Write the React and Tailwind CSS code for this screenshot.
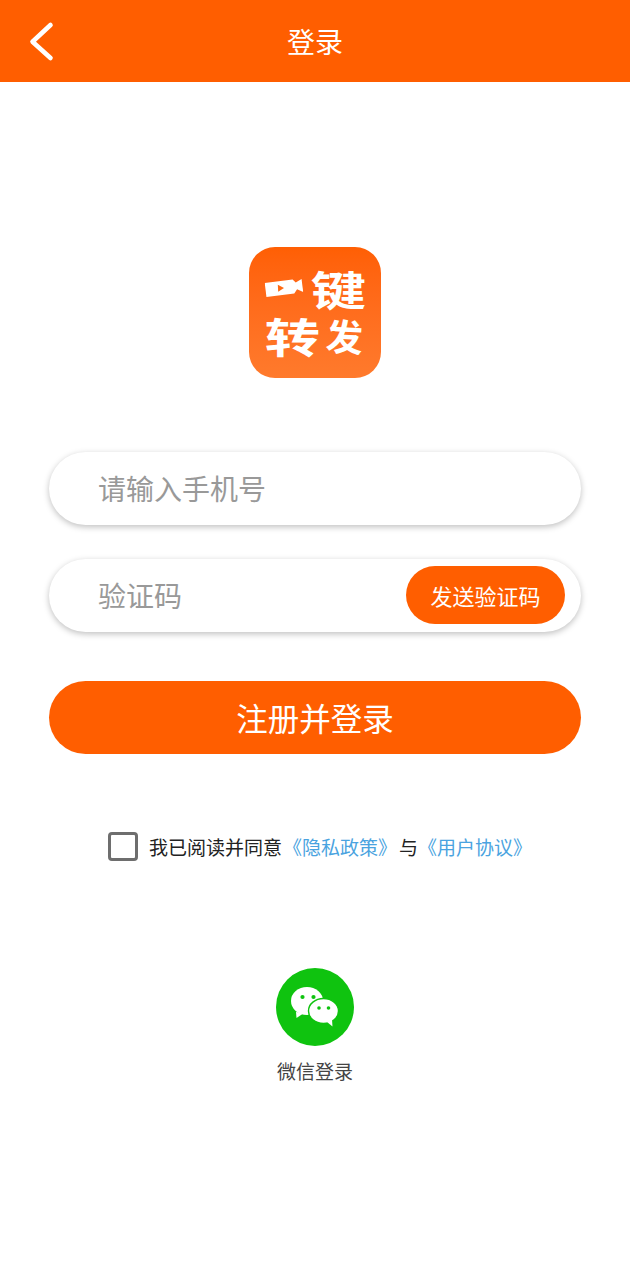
const cjk = { fontFamily: '"Noto Sans CJK SC", "Noto Sans", sans-serif' };

const WeChatIcon = () => (
  <svg viewBox="0 0 78 78" className="w-[78px] h-[78px]">
    <circle cx="39" cy="39" r="39" fill="#0fc30f" />
    <ellipse cx="31" cy="33" rx="16" ry="14" fill="#fff" />
    <path d="M20 44 L20.5 50 L28 45 Z" fill="#fff" />
    <circle cx="26.5" cy="29" r="2.1" fill="#0fc30f" />
    <circle cx="37.5" cy="29" r="2.1" fill="#0fc30f" />
    <ellipse cx="47.5" cy="43" rx="15" ry="12.5" fill="#fff" stroke="#0fc30f" strokeWidth="1.4" />
    <path d="M51 54 L56.5 58.5 L56 51 Z" fill="#fff" />
    <circle cx="43" cy="40" r="1.8" fill="#0fc30f" />
    <circle cx="52.5" cy="40" r="1.8" fill="#0fc30f" />
  </svg>
);

const Logo = () => (
  <div
    className="w-[132px] h-[131px] rounded-[26px] bg-gradient-to-b from-[#ff5f04] to-[#ff7a2c] flex flex-col items-center pt-[20px] text-white font-bold select-none"
    style={cjk}
  >
    <div className="h-[42px] w-[104px] flex items-center justify-between leading-none">
      <svg viewBox="0 0 38 18" className="w-[38px] h-[18px] ml-[2px] -rotate-3 shrink-0">
        <path d="M0 3 L28 1 L31 4 L37 1 L38 14 L32 11 L29 15 L1 17 Z" fill="#fff" />
        <path d="M13 5.5 L19 9 L13 12.5 Z" fill="#ff6a12" />
      </svg>
      <span className="text-[41px] w-[41px] mr-[8px] scale-x-[1.35] text-center">键</span>
    </div>
    <div className="h-[46px] mt-[3px] w-[98px] flex items-center justify-between leading-none">
      <span className="text-[41px] w-[41px] ml-[6px] scale-x-[1.35] text-center">转</span>
      <span className="text-[37px] w-[37px] mr-[1px] rotate-3 text-center">发</span>
    </div>
  </div>
);

export default function App() {
  return (
    <div className="w-[630px] min-h-[1280px] bg-white flex flex-col items-center" style={cjk}>
      <header className="w-full h-[82px] bg-[#ff5e00] flex items-center justify-center relative">
        <button className="absolute left-0 top-0 h-full w-[82px]">
          <svg viewBox="0 0 82 82" className="w-[82px] h-[82px]" fill="none">
            <path d="M50.5 25 L32.5 41.7 L50.5 58" stroke="#fff" strokeWidth="4.6" strokeLinecap="round" strokeLinejoin="round" />
          </svg>
        </button>
        <h1 className="text-[28px] leading-none text-white font-normal">登录</h1>
      </header>

      <div className="mt-[165px]">
        <Logo />
      </div>

      <div className="w-[532px] mt-[74px] flex flex-col">
        <div className="h-[73px] rounded-full bg-white shadow-[0_2px_6px_rgba(0,0,0,0.25)] flex items-center pl-[49px] pr-4">
          <input
            placeholder="请输入手机号"
            className="w-full -mt-[2px] text-[28px] outline-none placeholder:text-[#999999]"
          />
        </div>
        <div className="h-[73px] mt-[34px] rounded-full bg-white shadow-[0_2px_6px_rgba(0,0,0,0.25)] flex items-center pl-[49px] pr-[16px]">
          <input
            placeholder="验证码"
            className="flex-1 min-w-0 -mt-[2px] text-[28px] outline-none placeholder:text-[#999999]"
          />
          <button className="w-[159px] h-[58px] rounded-[29px] bg-[#ff5e00] text-white text-[22px] -mt-[1px]">
            发送验证码
          </button>
        </div>
        <button className="h-[73px] mt-[49px] rounded-full bg-[#ff5e00] text-white text-[31.5px]">
          注册并登录
        </button>
      </div>

      <div className="mt-[78px] ml-[10px] flex items-center text-[19px] leading-none text-[#222222]">
        <span className="w-[30px] h-[29px] rounded-[4px] border-[3px] border-[#6e6e6e] mr-[11px]"></span>
        <span>我已阅读并同意</span>
        <a className="text-[#4aa3e0] ml-[1px]">《隐私政策》</a>
        <span className="ml-[2px]">与</span>
        <a className="text-[#4aa3e0]">《用户协议》</a>
      </div>

      <div className="mt-[107px] flex flex-col items-center">
        <WeChatIcon />
        <span className="mt-[15px] text-[19px] leading-none text-[#444444]">微信登录</span>
      </div>
    </div>
  );
}
